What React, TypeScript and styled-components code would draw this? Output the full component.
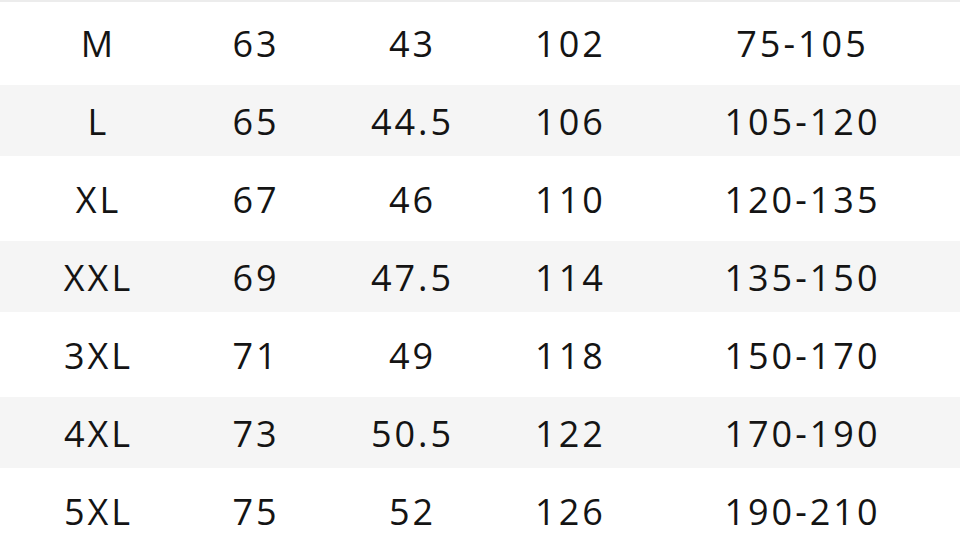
import React from "react";
import styled, { createGlobalStyle } from "styled-components";

const Global = createGlobalStyle`
  html, body { margin: 0; padding: 0; background: #ffffff; }
  body { width: 960px; height: 550px; overflow: hidden; }
`;

const Table = styled.div`
  width: 960px;
  border-top: 2px solid #ececec;
  padding-top: 1px;
  font-family: "Open Sans", "Noto Sans", sans-serif;
  color: #141414;
`;

const Row = styled.div<{ $shaded: boolean }>`
  display: grid;
  grid-template-columns: 158px 157px 156px 160px 304px;
  padding-left: 18px;
  padding-top: ${(p) => (p.$shaded ? "3px" : "3px")};
  box-sizing: border-box;
  align-items: center;
  height: ${(p) => (p.$shaded ? "71px" : "78px")};
  margin: ${(p) => (p.$shaded ? "3.5px 0" : "0")};
  background: ${(p) => (p.$shaded ? "#f5f5f5" : "#ffffff")};
`;

const Cell = styled.div`
  text-align: center;
  font-size: 36px;
  letter-spacing: 3px;
  line-height: 1;
  padding-left: 3px;
`;

const rows: string[][] = [
  ["M", "63", "43", "102", "75-105"],
  ["L", "65", "44.5", "106", "105-120"],
  ["XL", "67", "46", "110", "120-135"],
  ["XXL", "69", "47.5", "114", "135-150"],
  ["3XL", "71", "49", "118", "150-170"],
  ["4XL", "73", "50.5", "122", "170-190"],
  ["5XL", "75", "52", "126", "190-210"],
];

export default function App() {
  return (
    <>
      <Global />
      <Table>
        {rows.map((r, i) => (
          <Row key={r[0]} $shaded={i % 2 === 1}>
            {r.map((c, j) => (
              <Cell key={j}>{c}</Cell>
            ))}
          </Row>
        ))}
      </Table>
    </>
  );
}
